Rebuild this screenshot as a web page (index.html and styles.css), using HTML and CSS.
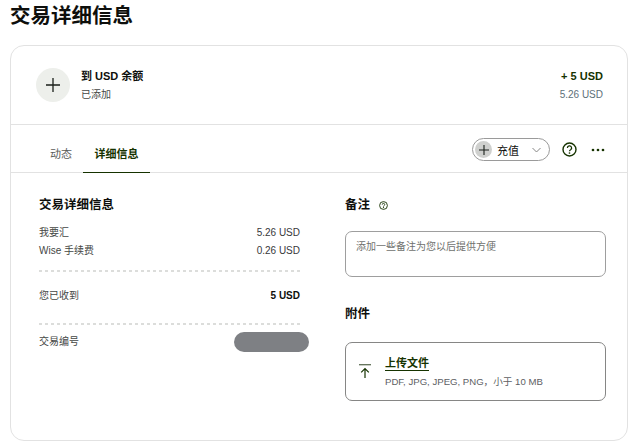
FILE: index.html
```html
<!DOCTYPE html>
<html lang="zh-CN">
<head>
<meta charset="utf-8">
<title>交易详细信息</title>
<link rel="stylesheet" href="styles.css">
</head>
<body>
<h1 class="page-title">交易详细信息</h1>
<main class="card">
  <section class="summary">
    <div class="summary-icon">
      <svg width="14" height="14" viewBox="0 0 14 14"><path d="M7 0v14M0 7h14" stroke="#1a1f1a" stroke-width="1.3" fill="none"/></svg>
    </div>
    <div class="summary-text">
      <div class="summary-title">到 USD 余额</div>
      <div class="summary-sub">已添加</div>
    </div>
    <div class="summary-amounts">
      <div class="amount-main">+ 5 USD</div>
      <div class="amount-sub">5.26 USD</div>
    </div>
  </section>
  <nav class="tabs">
    <a class="tab">动态</a>
    <a class="tab tab-active">详细信息</a>
    <div class="tab-actions">
      <button class="pill">
        <span class="pill-icon"><svg width="10" height="10" viewBox="0 0 10 10"><path d="M5 0v10M0 5h10" stroke="#1a1f1a" stroke-width="1.1" fill="none"/></svg></span>
        <span class="pill-label">充值</span>
        <svg class="pill-chevron" width="9" height="6" viewBox="0 0 9 6"><path d="M.5 1l4 4 4-4" stroke="#868685" stroke-width="1" fill="none"/></svg>
      </button>
      <svg class="help-icon" width="15" height="15" viewBox="0 0 15 15">
        <circle cx="7.5" cy="7.5" r="6.5" stroke="#163300" stroke-width="1.4" fill="none"/>
        <path d="M5.4 6a2.1 2.1 0 1 1 3.2 1.7c-.7.4-1.1.8-1.1 1.6" stroke="#163300" stroke-width="1.3" fill="none"/>
        <circle cx="7.5" cy="11" r=".85" fill="#163300"/>
      </svg>
      <svg class="more-icon" width="14" height="4" viewBox="0 0 14 4">
        <circle cx="2" cy="2" r="1.35" fill="#163300"/><circle cx="7" cy="2" r="1.35" fill="#163300"/><circle cx="12" cy="2" r="1.35" fill="#163300"/>
      </svg>
    </div>
  </nav>
  <section class="details">
    <div class="col-left">
      <h2 class="section-title">交易详细信息</h2>
      <div class="rows">
        <div class="row"><span>我要汇</span><span class="val">5.26 USD</span></div>
        <div class="row"><span>Wise 手续费</span><span class="val">0.26 USD</span></div>
      </div>
      <div class="dash"></div>
      <div class="row"><span>您已收到</span><span class="val strong">5 USD</span></div>
      <div class="dash dash-second"></div>
      <div class="row row-id"><span>交易编号</span><span class="redact"></span></div>
    </div>
    <div class="col-right">
      <h2 class="section-title">备注
        <svg class="note-help" width="9" height="9" viewBox="0 0 15 15">
          <circle cx="7.5" cy="7.5" r="6.5" stroke="#163300" stroke-width="1.5" fill="none"/>
          <path d="M5.4 6a2.1 2.1 0 1 1 3.2 1.7c-.7.4-1.1.8-1.1 1.6" stroke="#163300" stroke-width="1.4" fill="none"/>
          <circle cx="7.5" cy="11" r="1" fill="#163300"/>
        </svg>
      </h2>
      <div class="note-box">添加一些备注为您以后提供方便</div>
      <h2 class="section-title attach-title">附件</h2>
      <div class="upload">
        <svg class="upload-icon" width="12" height="15" viewBox="0 0 12 15"><path d="M0 .7h12" stroke="#5f6f56" stroke-width="1.3"/><path d="M6 14V5M2.2 8.4 6 4.6l3.8 3.8" stroke="#163300" stroke-width="1.2" fill="none"/></svg>
        <div>
          <div class="upload-title">上传文件</div>
          <div class="upload-sub">PDF, JPG, JPEG, PNG，小于 10 MB</div>
        </div>
      </div>
    </div>
  </section>
</main>
</body>
</html>
```
FILE: styles.css
```css
* { box-sizing: border-box; }
html, body { margin: 0; padding: 0; }
body {
  width: 640px;
  height: 446px;
  overflow: hidden;
  background: #fff;
  font-family: "Liberation Sans", "Noto Sans CJK SC", sans-serif;
  color: #37383a;
  padding: 0 12px 0 10px;
}
.page-title {
  margin: 0;
  padding-top: 1px;
  height: 45px;
  font-size: 20.5px;
  line-height: 30px;
  font-weight: 700;
  color: #0e0f0c;
}
.card {
  height: 396px;
  border: 1px solid #e2e2e2;
  border-radius: 14px;
}
.summary {
  height: 79px;
  display: flex;
  align-items: center;
  padding: 0 24px 0 25px;
  border-bottom: 1px solid #e2e2e2;
}
.summary-icon {
  width: 34px;
  height: 34px;
  border-radius: 50%;
  background: #edefeb;
  display: flex;
  align-items: center;
  justify-content: center;
  margin-right: 11px;
}
.summary-icon svg { display: block; }
.summary-text { flex: 1; }
.summary-title { font-size: 11px; line-height: 16px; font-weight: 700; color: #0e0f0c; margin-bottom: 3px; }
.summary-sub { font-size: 10px; line-height: 16px; color: #454745; }
.summary-amounts { text-align: right; }
.amount-main { font-size: 11px; line-height: 16px; font-weight: 700; color: #163300; margin-bottom: 3px; }
.amount-sub { font-size: 10px; line-height: 16px; color: #5d7079; }
.tabs {
  height: 48px;
  display: flex;
  align-items: stretch;
  padding: 0 22px 0 28px;
  border-bottom: 1px solid #e2e2e2;
}
.tab {
  position: relative;
  display: flex;
  align-items: center;
  justify-content: center;
  font-size: 11px;
  padding-top: 9px;
  color: #5a5c59;
}
.tab:first-child { width: 44px; }
.tab-active {
  width: 67px;
  font-weight: 700;
  color: #163300;
  box-shadow: 0 1px 0 #163300;
}
.tab-actions {
  margin-left: auto;
  display: flex;
  align-items: center;
  padding-top: 2px;
}
.pill {
  display: flex;
  align-items: center;
  width: 78px;
  height: 23px;
  padding: 0 0 0 2px;
  border: 1px solid #9a9a9a;
  border-radius: 12px;
  background: #fff;
  font: inherit;
  color: #0e0f0c;
}
.pill-icon {
  width: 17px;
  height: 17px;
  border-radius: 50%;
  background: #cfd0ce;
  display: flex;
  align-items: center;
  justify-content: center;
}
.pill-label { font-size: 11px; margin-left: 5px; }
.pill-chevron { margin-left: 13px; }
.help-icon { margin-left: 12px; display: block; }
.more-icon { margin-left: 14px; display: block; }
.details {
  display: flex;
  padding: 23px 0 0 28px;
}
.col-left { width: 261px; }
.col-right { width: 261px; margin-left: 45px; }
.section-title {
  margin: 0;
  font-size: 12.5px;
  line-height: 18px;
  font-weight: 700;
  color: #0e0f0c;
  display: flex;
  align-items: center;
}
.rows { margin-top: 10px; }
.row {
  display: flex;
  justify-content: space-between;
  align-items: center;
  font-size: 10px;
  line-height: 18px;
  color: #454745;
}
.val { color: #37383a; }
.strong { font-weight: 700; color: #0e0f0c; }
.dash {
  margin: 10px 0 15px;
  height: 2px;
  background: repeating-linear-gradient(90deg, #dcdddb 0 3px, transparent 3px 6px);
}
.dash-second { margin: 18px 0 8px; }
.row-id { position: relative; }
.redact {
  position: absolute;
  right: -9px;
  top: -1px;
  width: 75px;
  height: 20px;
  border-radius: 10px;
  background: #7e8084;
}
.note-help { margin-left: 9px; }
.note-box {
  margin-top: 17px;
  height: 46px;
  border: 1px solid #9e9e9e;
  border-radius: 7px;
  padding: 7px 10px;
  font-size: 10px;
  line-height: 16px;
  color: #6f716e;
}
.attach-title { margin-top: 28px; }
.upload {
  margin-top: 19px;
  height: 59px;
  border: 1px solid #868685;
  border-radius: 7px;
  display: flex;
  align-items: center;
  padding: 0 0 2px 13px;
}
.upload-icon { margin-right: 14px; margin-top: 2px; }
.upload-title {
  display: inline-block;
  font-size: 11px;
  line-height: 14px;
  font-weight: 700;
  color: #163300;
  border-bottom: 1px solid #163300;
}
.upload-sub { font-size: 9.6px; line-height: 14px; margin-top: 4px; color: #5d6063; }
```
